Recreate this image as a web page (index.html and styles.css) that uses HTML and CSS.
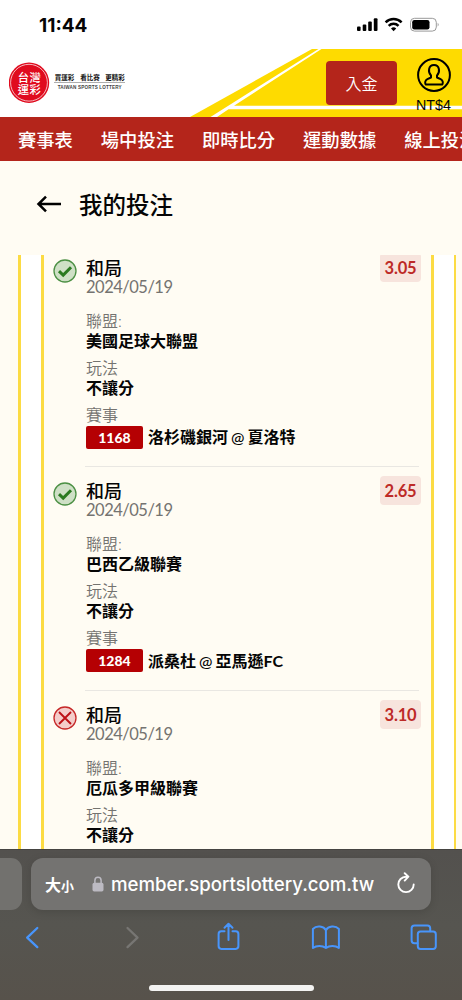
FILE: index.html
```html
<!DOCTYPE html>
<html lang="zh-Hant">
<head>
<meta charset="utf-8">
<meta name="viewport" content="width=device-width, initial-scale=1">
<title>我的投注</title>
<link rel="stylesheet" href="styles.css">
</head>
<body>
<div class="status">
  <span class="clock">11:44</span>
  <svg class="status-icons" width="84" height="16" viewBox="0 0 84 16">
    <rect x="1" y="9.5" width="3.6" height="4.5" rx="1"/>
    <rect x="6.7" y="7.5" width="3.6" height="6.5" rx="1"/>
    <rect x="12.2" y="4.5" width="3.6" height="9.5" rx="1"/>
    <rect x="17.8" y="1.2" width="3.7" height="12.8" rx="1"/>
    <g fill="none" stroke="#000" stroke-width="2.5">
      <path d="M29.600 5.300a11.400 11.400 0 0 1 16 0"/>
      <path d="M32.700 8.900a6.900 6.900 0 0 1 9.800 0"/>
    </g>
    <path d="M37.600 14.200l-2.600-2.700a3.800 3.800 0 0 1 5.200 0z"/>
    <rect x="54.500" y="1.300" width="25.800" height="12.800" rx="4" fill="none" stroke="#999"/>
    <rect x="56.200" y="3" width="17.300" height="9.400" rx="2.200"/>
    <path d="M81.700 5.800q2 1.900 0 3.800z" fill="#999"/>
  </svg>
</div>

<header class="header">
  <svg class="stripes" width="462" height="68" viewBox="0 0 462 68">
    <path d="M312 0H462V68H190z" fill="#fedb00"/>
    <path d="M318.500 0H321.500L234 56.800H462V60.300H228.500L217 68H210.500z" fill="#fff"/>
  </svg>
  <svg class="logo" width="120" height="43" viewBox="0 0 120 43">
    <circle cx="20" cy="21.700" r="20.200" fill="#e00b1e"/>
    <circle cx="20" cy="21.700" r="18.400" fill="none" stroke="#fff" stroke-width=".7"/>
    <g class="seal">
      <text x="8.700" y="21" textLength="23">台灣</text>
      <text x="8.700" y="32.600" textLength="23">運彩</text>
    </g>
    <g class="motto">
      <text x="45.800" y="18.800" textLength="19.500">買運彩</text>
      <text x="71.300" y="18.800" textLength="19.500">看比賽</text>
      <text x="96.300" y="18.800" textLength="19.500">更精彩</text>
    </g>
    <path d="M45 21.500H116" stroke="#999" stroke-width=".8"/>
    <text class="english" x="48.700" y="28.400" textLength="64">TAIWAN SPORTS LOTTERY</text>
  </svg>
  <button class="deposit">入金</button>
  <div class="account">
    <svg width="36" height="36" viewBox="0 0 36 36" fill="none" stroke="#000" stroke-width="2">
      <circle cx="18" cy="18" r="15.900"/>
      <path d="M15 18.500C11.800 15 12.200 8 18 8s6.200 7 3 10.500v2l3.600 1.700c2.200 1 2.700 3.400 1.800 5.200H9.600c-.9-1.800-.4-4.200 1.800-5.200L15 20.500z" stroke-linejoin="round"/>
    </svg>
    <span>NT$4</span>
  </div>
</header>

<nav class="nav"><span>賽事表</span><span>場中投注</span><span>即時比分</span><span>運動數據</span><span>線上投注</span></nav>

<div class="title">
  <svg width="26" height="20" viewBox="0 0 26 20" fill="none" stroke="#000" stroke-width="2.500"><path d="M25 10H2.500M10 2.700L2.500 10l7.500 7.300"/></svg>
  <h1>我的投注</h1>
</div>

<main class="list">
  <div class="outer"><div class="card">
    <article class="bet">
      <svg class="result" width="24" height="24" viewBox="0 0 24 24" fill="none"><circle cx="12" cy="12" r="11" fill="#cfe0c6" stroke="#4c9044" stroke-width="1.300"/><path d="M6 12.200l4.200 3.900 7.800-7.800" stroke="#2b7a20" stroke-width="3"/></svg>
      <div class="detail">
        <h2>和局</h2><time>2024/05/19</time>
        <dl><dt>聯盟:</dt><dd>美國足球大聯盟</dd><dt>玩法</dt><dd>不讓分</dd><dt>賽事</dt><dd class="match"><b>1168</b><span>洛杉磯銀河 <i>@</i> 夏洛特</span></dd></dl>
        <span class="odds">3.05</span>
      </div>
    </article>
    <article class="bet">
      <svg class="result" width="24" height="24" viewBox="0 0 24 24" fill="none"><circle cx="12" cy="12" r="11" fill="#cfe0c6" stroke="#4c9044" stroke-width="1.300"/><path d="M6 12.200l4.200 3.900 7.800-7.800" stroke="#2b7a20" stroke-width="3"/></svg>
      <div class="detail">
        <h2>和局</h2><time>2024/05/19</time>
        <dl><dt>聯盟:</dt><dd>巴西乙級聯賽</dd><dt>玩法</dt><dd>不讓分</dd><dt>賽事</dt><dd class="match"><b>1284</b><span>派桑杜 <i>@</i> 亞馬遜FC</span></dd></dl>
        <span class="odds">2.65</span>
      </div>
    </article>
    <article class="bet">
      <svg class="result" width="24" height="24" viewBox="0 0 24 24" fill="none"><circle cx="12" cy="12" r="11" fill="#f4cdca" stroke="#c62828" stroke-width="1.300"/><path d="M6 6l12 12M18 6L6 18" stroke="#bd1016" stroke-width="1.900"/></svg>
      <div class="detail">
        <h2>和局</h2><time>2024/05/19</time>
        <dl><dt>聯盟:</dt><dd>厄瓜多甲級聯賽</dd><dt>玩法</dt><dd>不讓分</dd></dl>
        <span class="odds">3.10</span>
      </div>
    </article>
  </div></div>
</main>

<footer class="browser">
  <div class="tabs">
    <div class="tab-prev"></div>
    <div class="address">
      <span class="size">大<small>小</small></span>
      <svg class="lock" width="12" height="16" viewBox="0 0 12 16"><rect x=".5" y="6.700" width="11" height="8.800" rx="1.700" fill="#bcbac2"/><path d="M2.900 7V4.400a3.100 3.100 0 0 1 6.200 0V7" fill="none" stroke="#bcbac2" stroke-width="1.500"/></svg>
      <span class="url">member.sportslottery.com.tw</span>
      <svg class="reload" width="20" height="22" viewBox="0 0 20 22" fill="none" stroke="#fff" stroke-width="1.900" stroke-linecap="round" stroke-linejoin="round"><path d="M10 4.700A7.700 7.700 0 1 0 17.700 12.400M8.700 1.200l3.700 3.500-3.700 3.900"/></svg>
    </div>
    <div class="tab-next"></div>
  </div>
  <svg class="tools" width="462" height="40" viewBox="0 0 462 40" fill="none" stroke="#4895fb" stroke-width="2" stroke-linecap="round" stroke-linejoin="round">
    <path d="M37.300 11L27.200 20.600l10.100 9.500" stroke-width="2.300"/>
    <path d="M127.500 11l10 9.600-10 9.500" stroke="#777673" stroke-width="2.300"/>
    <path d="M224.500 14.200h-3.200q-2.700 0-2.700 2.700v12.200q0 2.800 2.700 2.800h14.400q2.700 0 2.700-2.800V16.900q0-2.700-2.700-2.700h-3.200M228.500 23V7M224.500 10.700l4-4 4 4"/>
    <path d="M325.900 13.200v17.600M325.900 13.200c-2.200-4.200-9.500-5-13-1.200v19c3.500-2.700 9.500-2.700 13 0 3.500-2.700 9.500-2.700 13 0V12c-3.500-3.800-10.800-3-13 1.200z"/>
    <rect x="417.800" y="14.500" width="18" height="17.500" rx="2.700"/>
    <path d="M417.500 26.200h-3q-2.900 0-2.900-2.900V11.200q0-2.800 2.900-2.800h12.900q2.800 0 2.800 2.800v3"/>
  </svg>
  <div class="home"></div>
</footer>
</body>
</html>
```

FILE: styles.css
```css
* { box-sizing: border-box; }
body {
  margin: 0;
  width: 462px;
  height: 1000px;
  overflow: hidden;
  display: flex;
  flex-direction: column;
  background: #fffcf3;
  color: #050505;
  font-family: Lato, "Noto Sans CJK TC", sans-serif;
}
h1, h2, dl, dd { margin: 0; }
svg { display: block; flex: none; }

.status {
  height: 49px;
  flex: none;
  display: flex;
  justify-content: space-between;
  padding: 14px 22px 0 39px;
  background: #fff;
}
.clock { font: 700 19px/23px Inter, sans-serif; }
.status-icons { margin-top: 3px; }

.header {
  position: relative;
  height: 68px;
  flex: none;
  display: flex;
  align-items: flex-start;
  padding: 12px 11px 0 9px;
  background: #fff;
}
.stripes { position: absolute; inset: 0; }
.header > :not(.stripes) { position: relative; }
.seal { font: 500 11.300px/1 "Noto Sans CJK TC", sans-serif; fill: #fff; }
.motto { font: 700 6.500px/1 "Noto Sans CJK TC", sans-serif; fill: #111; }
.english { font: 700 4.600px/1 "Liberation Sans", sans-serif; fill: #444; }
.deposit {
  margin: 0 19px 0 auto;
  width: 71px;
  height: 44px;
  border: 0;
  border-radius: 4px;
  background: #b4251b;
  color: #fff;
  font: 350 16px "Noto Sans CJK TC", sans-serif;
}
.account {
  width: 35px;
  margin-top: -4px;
  display: flex;
  flex-direction: column;
  align-items: center;
  font: 14.300px/18px "Liberation Sans", sans-serif;
}
.account span { margin-top: 3px; }

.nav {
  height: 44px;
  flex: none;
  display: flex;
  gap: 28px;
  padding-left: 18px;
  overflow: hidden;
  white-space: nowrap;
  background: #b4251b;
  color: #fff;
  font: 500 18.300px/44px "Noto Sans CJK TC", sans-serif;
}

.title {
  height: 94px;
  flex: none;
  display: flex;
  align-items: center;
  gap: 17px;
  padding: 0 0 9px 36px;
}
.title h1 { font: 500 23.500px/30px "Noto Sans CJK TC", sans-serif; }

.list { flex: 1; min-height: 0; overflow: hidden; }
.outer {
  margin-left: 18px;
  width: 438px;
  padding: 0 20px;
  border: solid #fcdb43;
  border-width: 0 2.500px 0 3px;
  background: #fff;
}
.card {
  margin-top: -11.400px;
  padding: 0 10px;
  border: solid #fcdb43;
  border-width: 0 3px;
  background: #fffcf3;
}
.bet { display: flex; gap: 8px; height: 223.700px; }
.bet:last-child { height: 260px; }
.result { margin: 15px 0 0 -1px; }
.detail {
  position: relative;
  flex: 1;
  margin-right: 2px;
  padding: 13px 0 0 1px;
  border-bottom: 1.500px solid #e9e7e2;
}
.detail h2 { font: 500 18px/21px "Noto Sans CJK TC", sans-serif; }
.detail time { display: block; font-size: 16.500px; line-height: 18px; letter-spacing: -.5px; color: #747370; }
dl { margin-top: 15px; font-size: 16px; line-height: 20px; }
dt { color: #747370; font-weight: 350; }
dd { font-weight: 700; margin-bottom: 7px; }
.match { display: flex; align-items: center; gap: 5px; height: 25px; white-space: nowrap; word-spacing: -.8px; }
.match b {
  width: 57px;
  height: 23px;
  border-radius: 2px;
  background: #b50003;
  color: #fff;
  font-size: 14px;
  line-height: 23px;
  text-align: center;
}
.match i { font-style: normal; font-weight: 500; }
.odds {
  position: absolute;
  top: 9px;
  right: -2px;
  width: 41px;
  height: 29px;
  border-radius: 4px;
  background: #f7e4dd;
  color: #bd2a27;
  font-weight: 700;
  font-size: 16.500px;
  letter-spacing: -.2px;
  line-height: 30px;
  text-align: center;
}

.browser {
  height: 151px;
  flex: none;
  padding-top: 8px;
  background: linear-gradient(180deg, #53514e, #565550 50%, #57524b);
  border-top: 1px solid #454441;
}
.tabs { display: flex; gap: 9px; height: 52px; }
.tab-prev { width: 22px; border-radius: 0 11px 11px 0; background: #72716e; }
.tab-next { flex: 1; }
.address {
  width: 400px;
  display: flex;
  align-items: center;
  padding: 0 15px 0 14px;
  border-radius: 12px;
  background: #747371;
  box-shadow: 0 2px 8px #0002;
  color: #fff;
}
.size { width: 47px; font: 700 16px "Noto Sans CJK TC", sans-serif; }
.size small { font-size: 13px; }
.url { margin-left: 7px; font: 500 18.650px Inter, sans-serif; white-space: nowrap; }
.reload { margin: -2px 0 0 auto; }
.tools { margin-top: 7px; }
.home { width: 165px; height: 6px; margin: 28px auto 0; border-radius: 3px; background: #f3f3f2; }
```
